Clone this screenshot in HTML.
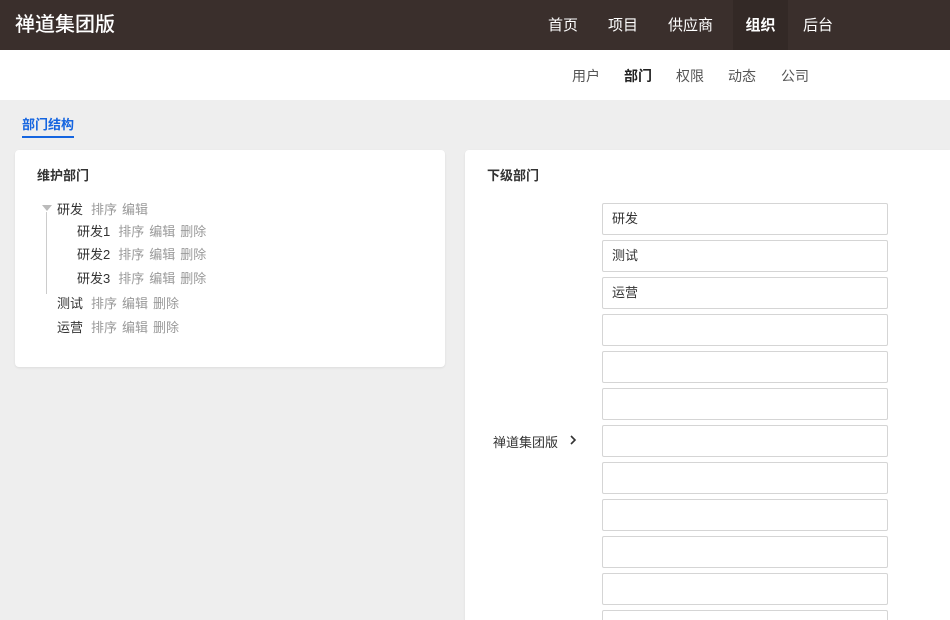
<!DOCTYPE html>
<html style="overflow:hidden;width:950px;height:620px"><head><meta charset="utf-8"><style>
*{margin:0;padding:0;box-sizing:border-box}
body{width:950px;height:620px;overflow:hidden;background:#eeeeee;font-family:"Liberation Sans","Noto Sans CJK SC",sans-serif;font-size:13px;color:#333;position:relative}
.top{position:absolute;left:0;top:0;width:950px;height:50px;background:#3a2f2c}
.logo{position:absolute;left:15px;top:10px;color:#fff;font-size:20px;font-weight:500;line-height:30px}
.nav a{position:absolute;top:1px;height:50px;line-height:50px;color:#fff;font-size:15px;text-decoration:none}
.sub{position:absolute;left:0;top:50px;width:950px;height:50px;background:#fff}
.sub a{position:absolute;top:1px;line-height:50px;color:#555;font-size:14px}
.tab{position:absolute;left:22px;top:116px;color:#1565e0;font-weight:bold;font-size:13px;border-bottom:2px solid #1565e0;padding-bottom:2px;line-height:18px}
.card{position:absolute;background:#fff;border-radius:4px;box-shadow:0 1px 2px rgba(0,0,0,.08)}
.h{position:absolute;font-weight:bold;font-size:13px;color:#333}
.t{position:absolute;font-size:13px;color:#333;white-space:nowrap}
.t span{color:#999;margin-left:8px}
.t span+span{margin-left:5px}
.in{position:absolute;left:602px;width:286px;height:32px;border:1px solid #d5d5d5;border-radius:2px;background:#fff;padding-left:9px;line-height:30px;font-size:13px}
</style></head><body>
<div class="top"><div class="logo">禅道集团版</div>
<div class="nav"><a style="left:548px">首页</a><a style="left:608px">项目</a><a style="left:668px">供应商</a><a style="left:733px;top:0;width:55px;background:#332926;text-align:center;font-weight:bold;line-height:52px">组织</a><a style="left:803px">后台</a></div></div>
<div class="sub"><a style="left:572px">用户</a><a style="left:624px;color:#222;font-weight:bold">部门</a><a style="left:676px">权限</a><a style="left:728px">动态</a><a style="left:781px">公司</a></div>
<div class="tab">部门结构</div>
<div class="card" style="left:15px;top:150px;width:430px;height:217px"></div>
<div class="h" style="left:37px;top:165px">维护部门</div>
<div style="position:absolute;left:42px;top:205px;width:0;height:0;border-left:5px solid transparent;border-right:5px solid transparent;border-top:6px solid #bbb"></div>
<div style="position:absolute;left:46px;top:212px;width:1px;height:82px;background:#ccc"></div>
<div class="t" style="left:57px;top:199px">研发<span>排序</span><span>编辑</span></div>
<div class="t" style="left:77px;top:221px">研发1<span>排序</span><span>编辑</span><span>删除</span></div>
<div class="t" style="left:77px;top:244px">研发2<span>排序</span><span>编辑</span><span>删除</span></div>
<div class="t" style="left:77px;top:268px">研发3<span>排序</span><span>编辑</span><span>删除</span></div>
<div class="t" style="left:57px;top:293px">测试<span>排序</span><span>编辑</span><span>删除</span></div>
<div class="t" style="left:57px;top:317px">运营<span>排序</span><span>编辑</span><span>删除</span></div>
<div class="card" style="left:465px;top:150px;width:485px;height:470px;border-radius:4px 0 0 0"></div>
<div class="h" style="left:487px;top:165px">下级部门</div>
<div class="t" style="left:493px;top:432px">禅道集团版</div>
<svg style="position:absolute;left:568px;top:434px" width="10" height="12" viewBox="0 0 10 12"><path d="M3 2 L7 6 L3 10" fill="none" stroke="#333" stroke-width="1.6"/></svg>
<div class="in" style="top:203px">研发</div>
<div class="in" style="top:240px">测试</div>
<div class="in" style="top:277px">运营</div>
<div class="in" style="top:314px"></div>
<div class="in" style="top:351px"></div>
<div class="in" style="top:388px"></div>
<div class="in" style="top:425px"></div>
<div class="in" style="top:462px"></div>
<div class="in" style="top:499px"></div>
<div class="in" style="top:536px"></div>
<div class="in" style="top:573px"></div>
<div class="in" style="top:610px;height:10px;border-bottom:none;border-radius:2px 2px 0 0"></div>
</body></html>
